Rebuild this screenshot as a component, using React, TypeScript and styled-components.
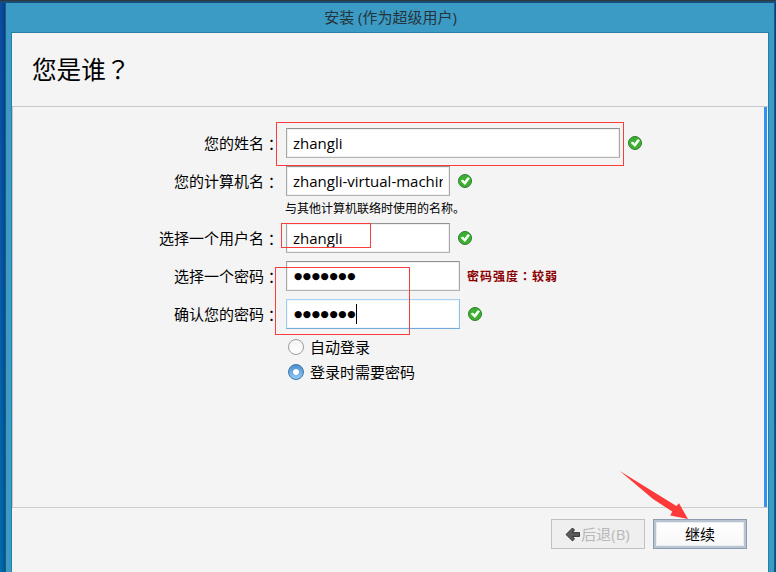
import React from "react";
import styled, { createGlobalStyle } from "styled-components";

const Global = createGlobalStyle`
  * { box-sizing: border-box; }
  html, body { margin: 0; padding: 0; overflow: hidden; }
  body {
    width: 776px;
    height: 572px;
    color: #000;
    font-family: "Open Sans", "Noto Sans CJK SC", sans-serif;
    font-size: 15px;
  }
`;

const Desktop = styled.div`
  position: relative;
  width: 776px;
  height: 572px;
  padding: 2px 1px 0 5px;
  overflow: hidden;
  border-top: 1px solid #333736;
  background: linear-gradient(90deg, rgba(0, 20, 70, 0) 0, rgba(0, 20, 70, 0.3) 5px),
    linear-gradient(#0a4fa5, #0070b4);
  box-shadow: inset 0 2px 0 #174f7c;
`;

const Window = styled.main`
  display: flex;
  flex-direction: column;
  height: 569px;
  padding: 0 5px;
  border: solid #1b5b7c;
  border-width: 0 1px;
  background: #3b9bc5;
`;

const TitleBar = styled.header`
  height: 29px;
  padding-left: 1px;
  line-height: 29px;
  text-align: center;
  color: #25343b;
  font-size: 15px;
  white-space: nowrap;
`;

const Content = styled.section`
  flex: 1;
  display: flex;
  flex-direction: column;
  border: solid #267fa5;
  border-width: 1px 1px 0;
  background: #f4f4f4;
`;

const Heading = styled.h1`
  height: 74px;
  margin: 0;
  padding-left: 20px;
  border-bottom: 1px solid #c8c8c8;
  font-size: 24.6px;
  font-weight: 400;
  line-height: 71px;
`;

const Body = styled.div`
  height: 401px;
  padding: 21px 0 0 0;
  border-left: 1px solid #c8c8c8;
  border-bottom: 1px solid #ccc;
  background: linear-gradient(#3093ef, #3093ef) right 1px top / 3px 100% no-repeat;
`;

const Row = styled.div<{ $after?: number }>`
  display: grid;
  grid-template-columns: 267px auto auto;
  justify-content: start;
  align-items: center;
  height: 30px;
  margin-bottom: ${(p) => p.$after ?? 8}px;
`;

const Label = styled.label`
  padding-right: 1px;
  text-align: right;
  line-height: 30px;
  white-space: nowrap;
`;

const Punct = styled.span`
  font-family: "Noto Sans CJK TC", sans-serif;
`;

const Colon = styled(Punct)`
  display: inline-block;
  transform: translateY(1px);
`;

const Field = styled.div<{ $width: number; $focused?: boolean }>`
  display: flex;
  align-items: center;
  width: ${(p) => p.$width}px;
  height: 30px;
  margin-left: 6px;
  padding: 0 6px;
  border: 1px solid;
  border-color: ${(p) => (p.$focused ? "#a9d2f9 #91c0eb #73aada #a0caef" : "#919191 #a5a5a5 #b4b4b4 #a5a5a5")};
  background: #fff;
  box-shadow: inset 0 0 0 1px ${(p) => (p.$focused ? "#f0f7ff" : "#f0f0f0")};
  line-height: 28px;
`;

const Value = styled.span`
  min-width: 0;
  overflow: hidden;
  white-space: nowrap;
  font-size: 15px;
`;

const Dots = styled.span`
  padding-left: 1px;
  font-family: "DejaVu Sans", sans-serif;
  font-size: 9.5px;
  line-height: 26px;
  letter-spacing: 0.58px;
  white-space: nowrap;
`;

const Caret = styled.i`
  width: 1px;
  height: 20px;
  background: #000;
`;

const Note = styled.p`
  height: 27px;
  margin: 0 0 0 272px;
  font-size: 12px;
  line-height: 25px;
`;

const Strength = styled.strong`
  margin-left: 7px;
  color: #8b0000;
  font-size: 12px;
  letter-spacing: 1px;
  white-space: nowrap;
`;

const Status = styled.svg`
  display: block;
  width: 14px;
  height: 14px;
  margin-left: 8px;
`;

const Radios = styled.div`
  margin: -3px 0 0 275px;
`;

const Choice = styled.label`
  display: flex;
  align-items: center;
  gap: 6px;
  height: 25px;
`;

const Radio = styled.span<{ $on?: boolean }>`
  width: 16px;
  height: 16px;
  border: 1px solid ${(p) => (p.$on ? "#3977ae" : "#9b9b9b")};
  border-radius: 50%;
  background: ${(p) =>
    p.$on
      ? "radial-gradient(circle, #fff 0 2.5px, transparent 3.5px), linear-gradient(#4c8fcd, #91c9f5)"
      : "linear-gradient(#f5f5f5, #fff)"};
`;

const Actions = styled.footer`
  display: flex;
  justify-content: flex-end;
  gap: 8px;
  padding: 11px 21px 0 0;
`;

const Button = styled.button<{ $primary?: boolean }>`
  display: flex;
  align-items: center;
  justify-content: center;
  width: 94px;
  height: 30px;
  padding: 0 ${(p) => (p.$primary ? 0 : 1)}px 0 0;
  border: 1px solid ${(p) => (p.$primary ? "#8f9caf" : "#c1c1c1")};
  background: ${(p) => (p.$primary ? "linear-gradient(#fff, #f7f7f7)" : "#efefef")};
  box-shadow: ${(p) => (p.$primary ? "inset 0 0 0 2px #b9c4d3, inset 0 0 0 3px #e9edf3" : "none")};
  color: ${(p) => (p.$primary ? "#000" : "#b7b7b7")};
  font-family: inherit;
  font-size: 15px;
  line-height: 28px;
`;

const Mark = styled.div<{ $x: number; $y: number; $w: number; $h: number }>`
  position: absolute;
  left: ${(p) => p.$x}px;
  top: ${(p) => p.$y - 1}px;
  width: ${(p) => p.$w}px;
  height: ${(p) => p.$h}px;
  border: 1px solid #fa3c3c;
  pointer-events: none;
`;

const Pointer = styled.svg`
  position: absolute;
  left: 619px;
  top: 469px;
  pointer-events: none;
`;

const Ok = () => (
  <Status viewBox="0 0 14 14">
    <defs>
      <linearGradient id="okFill" x2="0" y2="1">
        <stop stopColor="#3faa38" />
        <stop offset=".5" stopColor="#38b62a" />
        <stop offset="1" stopColor="#45a834" />
      </linearGradient>
    </defs>
    <circle cx="7" cy="7" r="6.5" fill="url(#okFill)" stroke="#2f7d33" />
    <path d="M3.2 6.8 5.1 6l1.5 1.7 3.2-4.1 1.7.8-4.6 6.2Z" fill="#fff" stroke="#fff" strokeWidth=".8" />
  </Status>
);

const Caption = ({ text }: { text: string }) => (
  <Label>
    {text}
    <Colon>：</Colon>
  </Label>
);

export default function App() {
  return (
    <>
      <Global />
      <Desktop>
        <Window>
          <TitleBar>安装 (作为超级用户)</TitleBar>
          <Content>
            <Heading>
              您是谁<Punct>？</Punct>
            </Heading>
            <Body>
              <Row>
                <Caption text="您的姓名" />
                <Field $width={334}><Value>zhangli</Value></Field>
                <Ok />
              </Row>
              <Row $after={0}>
                <Caption text="您的计算机名" />
                <Field $width={164}><Value>zhangli-virtual-machine</Value></Field>
                <Ok />
              </Row>
              <Note>与其他计算机联络时使用的名称。</Note>
              <Row>
                <Caption text="选择一个用户名" />
                <Field $width={164}><Value>zhangli</Value></Field>
                <Ok />
              </Row>
              <Row>
                <Caption text="选择一个密码" />
                <Field $width={174}><Dots>●●●●●●●</Dots></Field>
                <Strength>密码强度<Punct>：</Punct>较弱</Strength>
              </Row>
              <Row>
                <Caption text="确认您的密码" />
                <Field $width={174} $focused><Dots>●●●●●●●</Dots><Caret /></Field>
                <Ok />
              </Row>
              <Radios>
                <Choice><Radio />自动登录</Choice>
                <Choice><Radio $on />登录时需要密码</Choice>
              </Radios>
            </Body>
            <Actions>
              <Button disabled>
                <svg width="16" height="16" viewBox="0 0 16 16">
                  <path
                    d="M1 8.5 7.5 2l2 2L7.4 6.6H14.5v3.8H7.4l2.1 2.5-2 2Z"
                    fill="#5a5a5a"
                    stroke="#333"
                    strokeLinejoin="round"
                  />
                </svg>
                后退(B)
              </Button>
              <Button $primary>继续</Button>
            </Actions>
          </Content>
        </Window>
        <Mark $x={276} $y={122} $w={348} $h={44} />
        <Mark $x={281} $y={223} $w={90} $h={25} />
        <Mark $x={275} $y={267} $w={135} $h={68} />
        <Pointer width="70" height="52" viewBox="0 0 70 52">
          <path d="M.8 1 57.4 36 60 33.3 69 49 51.3 45.6 53.2 41.5 34 29Z" fill="#fd3939" />
        </Pointer>
      </Desktop>
    </>
  );
}
